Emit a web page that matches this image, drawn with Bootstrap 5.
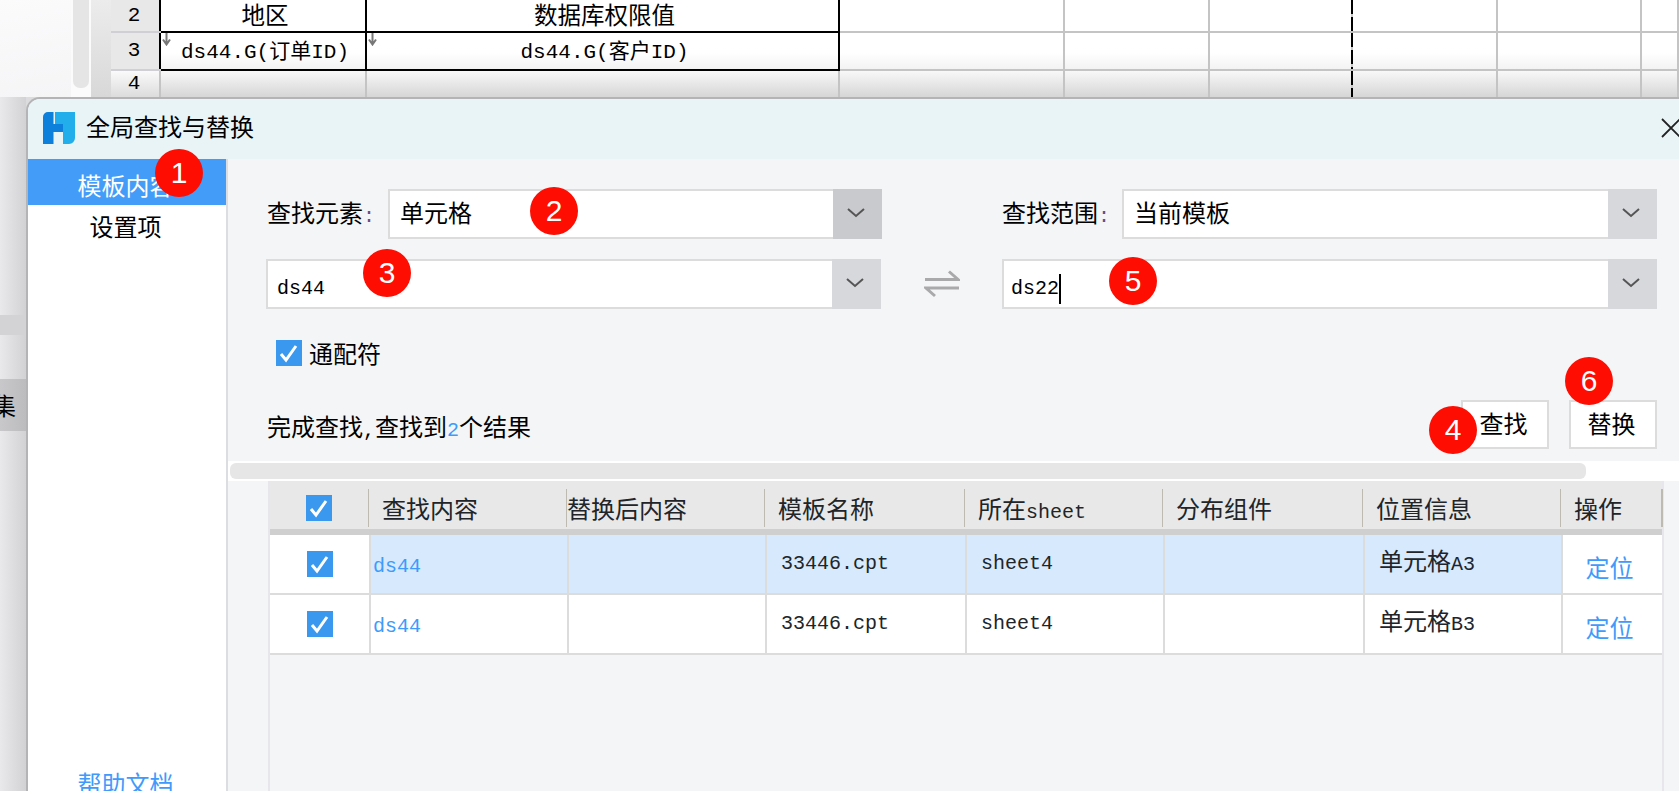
<!DOCTYPE html>
<html lang="zh">
<head>
<meta charset="utf-8">
<title>全局查找与替换</title>
<link href="https://cdn.jsdelivr.net/npm/bootstrap@5.3.0/dist/css/bootstrap.min.css" rel="stylesheet">
<style>
html,body{height:791px;overflow:hidden;background:#f4f4f6;}
body{font-family:"Noto Sans CJK SC","Liberation Sans",sans-serif;font-size:24px;line-height:28px;color:#000;}
.mono{font-family:"Liberation Mono","Noto Sans CJK SC",monospace;font-size:20px;}
.stage{width:1679px;height:791px;overflow:hidden;}
.sheet{height:97px;background:linear-gradient(170deg,#fbfbfc 0,#f0f0f2 50%,#dedee0 100%);}
.lower{background:#dcdcde;}
.sb-track{width:20px;padding:0 2px;background:#fbfbfb;}
.sb-thumb{height:88px;background:#e5e5e6;border-radius:0 0 7px 7px;}
.sb-gutter{width:20px;background:linear-gradient(#ececec,#d8d8d8);}
.fillcol{width:72px;}
.sheet-tbl{table-layout:fixed;width:1567px;font-size:23.5px;}
.sheet-tbl td{border:2px solid #c4c4c4;border-top:0;padding:0;text-align:center;vertical-align:middle;position:relative;line-height:24px;white-space:nowrap;background:#fff;}
.sheet-tbl tr.r2 td{height:32px;padding:0 0 3px 4px;}
.sheet-tbl tr.r3 td{height:38px;background:linear-gradient(#fff 55%,#f3f3f3);padding:4px 0 0 4px;}
.sheet-tbl tr.r4 td{height:27px;background:linear-gradient(#f8f8f8,#d6d6d6);border-bottom:0;}
.sheet-tbl td.rowhd{background:#e8e8e8;border-left:0;border-right:0;border-bottom-color:#d0d0d4;padding:0 2px 0 0!important;font-size:21px;}
.sheet-tbl tr.r3 td.rowhd{background:#e8e8e8;}
.sheet-tbl tr.r4 td.rowhd{background:linear-gradient(#fafafa,#dcdcdc);}
.sheet-tbl td.blk{border:2px solid #000;}
.sheet-tbl td.blk.mono{font-size:21px;}
.sheet-tbl tr.r2 td.blk{border-top:0;}
.sheet-tbl tr.r4 td.blkt{border-top:0;}
.sheet-tbl td.dash{border-left-color:transparent;background-clip:padding-box;}
.dashline{position:absolute;left:-2px;top:0;bottom:0;width:2px;background:repeating-linear-gradient(#000 0 14px,#ccc 14px 17px);}
.down{position:absolute;left:1px;top:0;width:9px;height:13px;}
.strip{width:26px;background:linear-gradient(90deg,#e9e9eb,#d2d2d4);overflow:hidden;flex:none;}
.strip-a{height:218px;flex:none;}
.strip-b{height:20px;background:#d3d3d5;flex:none;}
.strip-c{height:44px;flex:none;}
.strip-d{height:52px;flex:none;background:linear-gradient(90deg,#c8c8ca,#bcbcbe);padding-right:10px;white-space:nowrap;}
.dlg{width:1653px;height:694px;border-left:2px solid #b4b4b6;border-top:2px solid #b4b4b6;border-top-left-radius:14px;overflow:hidden;background:#f4f5f7;}
.dlg-head{height:60px;flex:none;background:#e9f4f7;padding-left:15px;gap:11px;}
.dlg-title{line-height:30px;padding-bottom:6px;}
.dlg-body{min-height:0;}
.logo{flex:none;margin-top:-3px;}
.closex{margin-left:auto;margin-right:-2px;margin-bottom:2px;width:20px;height:20px;flex:none;}
.side{width:200px;background:#fff;border-right:2px solid #dcdde0;flex:none;}
.side .list-group-item{border:0;border-radius:0;background:transparent;color:#000;padding:0 3px 0 0;height:46px;line-height:52px;text-align:center;}
.side .list-group-item.active{background:#439cf8;color:#fff;z-index:1;}
.side .sec{height:44px;line-height:42px;}
.helplink{color:#3f9bfb;text-align:center;margin-bottom:-6px;padding-right:3px;line-height:28px;text-decoration:none;}
.panel{width:1451px;}
.formgrid{display:grid;grid-template-columns:121px 494px 120px 120px 535px;grid-auto-rows:50px;row-gap:20px;padding:30px 0 0 39px;width:1429px;flex:none;}
.lbl{line-height:46px;white-space:nowrap;}
.lbl i{font-family:"Liberation Mono",monospace;font-style:normal;color:#6b4a86;font-size:20px;}
.combo{height:50px;flex-wrap:nowrap;}
.combo .form-control{border:2px solid #dcdcdc;border-right:0;border-radius:0;background:#fff;padding:0 0 0 10px;font-size:24px;color:#000;line-height:42px;height:50px;box-shadow:none;}
.combo .input-group-text{width:49px;border:0;border-radius:0;margin-left:0!important;background:#d7d8db;padding:0 4px 3px 0;justify-content:center;}
.combo .input-group-text.dark{background:#c9cacd;}
.combo .fieldtxt{padding-left:9px;padding-top:7px;font-family:"Liberation Mono",monospace;font-size:20px;}
.combo-wide2 .fieldtxt{padding-left:7px!important;}
.combo-wide{grid-column:1 / span 2;margin-left:-1px;}
.combo-wide2{grid-column:4 / span 2;}
.caret-bar{display:inline-block;width:2px;height:30px;background:#000;vertical-align:middle;margin-left:0;}
.swapcell{display:flex;align-items:center;justify-content:center;}
.wild{padding-left:48px;margin-top:31px;gap:7px;height:26px;flex:none;}
.tick{width:26px;height:26px;flex:none;display:block;}
.statusrow{margin-top:34px;height:49px;padding-left:39px;padding-right:22px;flex:none;}
.statusrow .mono{font-size:20px;}
.stat-txt{padding-top:8px;}
.cnt{color:#3f9bfb;}
.tbtn{width:88px;height:49px;background:#fff;border:2px solid #dcdcdc;border-radius:0;padding:0 3px 4px 0;font-size:24px;line-height:40px;color:#000;}
.tbtn-gap{gap:20px;}
.hscroll{height:20px;background:#fff;margin-top:12px;padding:2px 93px 2px 2px;flex:none;}
.hthumb{height:16px;background:#e6e6e6;border-radius:6px;}
.tblwrap{margin-left:40px;width:1396px;height:330px;flex:none;border-left:2px solid #e7e7eb;border-right:2px solid #e7e7eb;}
.res-tbl{table-layout:fixed;width:1392px;margin:0;border-collapse:separate;border-spacing:0;--bs-table-bg:transparent;}
.res-tbl th,.res-tbl td{padding:0;border:0;white-space:nowrap;box-shadow:none;}
.res-tbl thead th{background:#e8e8e8;height:54px;padding-top:8px;border-bottom:6px solid #cfcfcf;font-weight:400;vertical-align:top;}
.hcell{height:38px;border-right:2px solid #bdbbb1;line-height:38px;padding-left:13px;margin-right:-1px;}
.hcell.tight{padding-left:0;}
.hcell.ck{padding:0;display:flex;justify-content:center;align-items:center;}
.res-tbl tbody td{height:60px;background:#fff;border-left:2px solid #dcdcdc;border-bottom:2px solid #dcdcdc;vertical-align:middle;line-height:28px;padding-left:14px;}
.res-tbl tbody td:first-child{border-left:0;padding:0;}
.res-tbl tbody tr.sel td.hl{background:#d6e9fd;}
.res-tbl td.lnk{color:#3f9bfb;padding-left:2px;padding-top:6px;}
.res-tbl td.act{color:#3f9bfb;text-align:center;padding:6px 6px 0 0;}
.res-tbl td.cellpos{padding-bottom:3px;}
.res-tbl .ckbox{display:flex;justify-content:center;}
.pin{position:absolute;z-index:5;width:48px;height:48px;border-radius:50%;background:#fd0d02;color:#fff;font-family:"Liberation Sans",sans-serif;font-size:30px;line-height:48px;text-align:center;}
.p1{left:155px;top:149px;}.p2{left:530px;top:187px;}.p3{left:363px;top:249px;}
.p4{left:1429px;top:406px;}.p5{left:1109px;top:257px;}.p6{left:1565px;top:357px;}
</style>
</head>
<body>
<div class="stage position-relative">
  <div class="sheet d-flex">
    <div class="fillcol"></div>
    <div class="sb-track"><div class="sb-thumb"></div></div>
    <div class="sb-gutter"></div>
    <table class="sheet-tbl">
      <colgroup><col style="width:49px"><col style="width:206px"><col style="width:473px"><col style="width:225px"><col style="width:145px"><col style="width:143px"><col style="width:145px"><col style="width:144px"><col style="width:37px"></colgroup>
      <tr class="r2"><td class="rowhd mono">2</td><td class="blk">地区</td><td class="blk">数据库权限值</td><td></td><td></td><td></td><td class="dash"><span class="dashline"></span></td><td></td><td></td></tr>
      <tr class="r3"><td class="rowhd mono">3</td>
        <td class="blk mono"><svg class="down" viewBox="0 0 9 13"><path d="M4.5 0v10M1 6.5l3.5 5 3.5-5" fill="none" stroke="#777" stroke-width="2"/></svg>ds44.G(订单ID)</td>
        <td class="blk mono"><svg class="down" viewBox="0 0 9 13"><path d="M4.5 0v10M1 6.5l3.5 5 3.5-5" fill="none" stroke="#777" stroke-width="2"/></svg>ds44.G(客户ID)</td>
        <td></td><td></td><td></td><td class="dash"><span class="dashline"></span></td><td></td><td></td></tr>
      <tr class="r4"><td class="rowhd mono">4</td><td class="blkt"></td><td></td><td></td><td></td><td></td><td class="dash"><span class="dashline"></span></td><td></td><td></td></tr>
    </table>
  </div>
  <div class="lower d-flex">
    <div class="strip d-flex flex-column">
      <div class="strip-a"></div><div class="strip-b"></div><div class="strip-c"></div>
      <div class="strip-d d-flex align-items-center justify-content-end">数据集</div>
    </div>
    <div class="dlg d-flex flex-column">
      <div class="dlg-head d-flex align-items-center">
        <svg class="logo" width="32" height="32" viewBox="0 0 32 32">
          <path d="M5 0h5.5v12H20v8h-9.5v12H0V5a5 5 0 0 1 5-5z" fill="#0d80dc"/>
          <path d="M12 0H32V26a6 6 0 0 1-6 6H20V12H12z" fill="#21aeea"/>
        </svg>
        <div class="dlg-title">全局查找与替换</div>
        <svg class="closex" viewBox="0 0 20 20"><path d="M1 1l18 18M19 1L1 19" stroke="#222" stroke-width="1.8" fill="none"/></svg>
      </div>
      <div class="dlg-body d-flex flex-grow-1">
        <div class="side d-flex flex-column">
          <div class="list-group list-group-flush">
            <div class="list-group-item active">模板内容</div>
            <div class="list-group-item sec">设置项</div>
          </div>
          <a href="#" class="helplink mt-auto">帮助文档</a>
        </div>
        <div class="panel d-flex flex-column">
          <div class="formgrid">
            <div class="lbl">查找元素<i>:</i></div>
            <div class="input-group combo">
              <div class="form-control">单元格</div>
              <div class="input-group-text dark"><svg width="20" height="12" viewBox="0 0 20 12"><path d="M2 2l8 7 8-7" fill="none" stroke="#555" stroke-width="2"/></svg></div>
            </div>
            <div></div>
            <div class="lbl">查找范围<i>:</i></div>
            <div class="input-group combo">
              <div class="form-control">当前模板</div>
              <div class="input-group-text"><svg width="20" height="12" viewBox="0 0 20 12"><path d="M2 2l8 7 8-7" fill="none" stroke="#555" stroke-width="2"/></svg></div>
            </div>
            <div class="input-group combo combo-wide">
              <div class="form-control fieldtxt">ds44</div>
              <div class="input-group-text"><svg width="20" height="12" viewBox="0 0 20 12"><path d="M2 2l8 7 8-7" fill="none" stroke="#555" stroke-width="2"/></svg></div>
            </div>
            <div class="swapcell">
              <svg width="36" height="28" viewBox="0 0 36 28"><path d="M1 9.5h33l-9-8M35 18H2l9 8" fill="none" stroke="#a9a9ab" stroke-width="3"/></svg>
            </div>
            <div class="input-group combo combo-wide2">
              <div class="form-control fieldtxt">ds22<span class="caret-bar"></span></div>
              <div class="input-group-text"><svg width="20" height="12" viewBox="0 0 20 12"><path d="M2 2l8 7 8-7" fill="none" stroke="#555" stroke-width="2"/></svg></div>
            </div>
          </div>
          <div class="wild d-flex align-items-center">
            <svg class="tick" viewBox="0 0 26 26"><rect width="26" height="26" fill="#3a98ef"/><path d="M5 14l5 6 10-14" fill="none" stroke="#fff" stroke-width="3"/></svg>
            <span>通配符</span>
          </div>
          <div class="statusrow d-flex align-items-center justify-content-between">
            <div class="text-nowrap stat-txt">完成查找<span class="mono">,</span>查找到<span class="mono cnt">2</span>个结果</div>
            <div class="d-flex tbtn-gap">
              <button type="button" class="btn tbtn">查找</button>
              <button type="button" class="btn tbtn">替换</button>
            </div>
          </div>
          <div class="hscroll"><div class="hthumb"></div></div>
          <div class="tblwrap">
            <table class="table res-tbl">
              <colgroup><col style="width:99px"><col style="width:198px"><col style="width:198px"><col style="width:200px"><col style="width:198px"><col style="width:200px"><col style="width:198px"><col style="width:101px"></colgroup>
              <thead><tr>
                <th><div class="hcell ck"><svg class="tick" viewBox="0 0 26 26"><rect width="26" height="26" fill="#3a98ef"/><path d="M5 14l5 6 10-14" fill="none" stroke="#fff" stroke-width="3"/></svg></div></th>
                <th><div class="hcell">查找内容</div></th>
                <th><div class="hcell tight">替换后内容</div></th>
                <th><div class="hcell">模板名称</div></th>
                <th><div class="hcell">所在<span class="mono">sheet</span></div></th>
                <th><div class="hcell">分布组件</div></th>
                <th><div class="hcell">位置信息</div></th>
                <th><div class="hcell">操作</div></th>
              </tr></thead>
              <tbody>
                <tr class="sel">
                  <td><div class="ckbox"><svg class="tick" viewBox="0 0 26 26"><rect width="26" height="26" fill="#3a98ef"/><path d="M5 14l5 6 10-14" fill="none" stroke="#fff" stroke-width="3"/></svg></div></td>
                  <td class="hl lnk mono">ds44</td><td class="hl"></td><td class="hl mono">33446.cpt</td><td class="hl mono">sheet4</td><td class="hl"></td><td class="hl cellpos">单元格<span class="mono">A3</span></td><td class="act">定位</td>
                </tr>
                <tr>
                  <td><div class="ckbox"><svg class="tick" viewBox="0 0 26 26"><rect width="26" height="26" fill="#3a98ef"/><path d="M5 14l5 6 10-14" fill="none" stroke="#fff" stroke-width="3"/></svg></div></td>
                  <td class="lnk mono">ds44</td><td></td><td class="mono">33446.cpt</td><td class="mono">sheet4</td><td></td><td class="cellpos">单元格<span class="mono">B3</span></td><td class="act">定位</td>
                </tr>
              </tbody>
            </table>
          </div>
        </div>
      </div>
    </div>
  </div>
  <div class="pin p1">1</div><div class="pin p2">2</div><div class="pin p3">3</div>
  <div class="pin p4">4</div><div class="pin p5">5</div><div class="pin p6">6</div>
</div>
<script src="https://cdn.jsdelivr.net/npm/bootstrap@5.3.0/dist/js/bootstrap.bundle.min.js"></script>
</body>
</html>
